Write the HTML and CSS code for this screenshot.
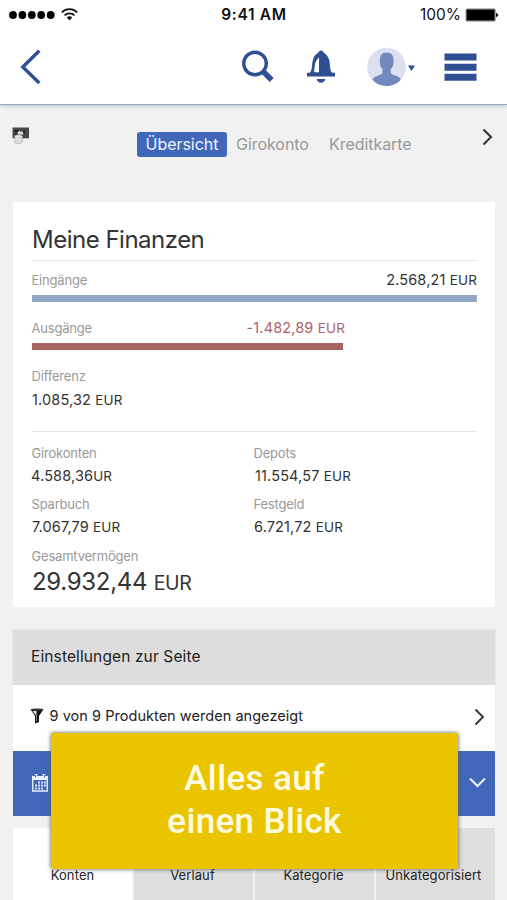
FILE: index.html
```html
<!DOCTYPE html>
<html lang="de">
<head>
<meta charset="utf-8">
<title>Meine Finanzen</title>
<link rel="stylesheet" href="styles.css">
</head>
<body>
<div class="screen">
  <header class="top">
    <div class="status">
      <div class="signal">
        <svg width="46" height="8" viewBox="0 0 46 8"><circle cx="4" cy="4" r="3.9"/><circle cx="13.4" cy="4" r="3.9"/><circle cx="22.8" cy="4" r="3.9"/><circle cx="32.2" cy="4" r="3.9"/><circle cx="41.7" cy="4" r="3.9"/></svg>
        <svg class="wifi" width="17" height="13" viewBox="0 0 17 13" fill="none" stroke="#111" stroke-width="1.7"><path d="M.8 4.4C5 .1 12 .1 16.200 4.400M3.500 7.300c2.800-2.700 7.200-2.700 10 0"/><path d="M5.700 9.300c1.600-1.500 4-1.500 5.600 0L8.500 12.500z" fill="#111" stroke="none"/></svg>
      </div>
      <span class="time">9:41 AM</span>
      <div class="power"><span class="percent">100%</span>
        <svg width="34" height="14" viewBox="0 0 34 14"><rect x=".6" y=".6" width="30" height="12.800" rx="1.500" fill="#777"/><rect x="1.800" y="1.800" width="27.600" height="10.400" rx=".5"/><path d="M31 4.500 33.500 7 31 9.500z"/></svg>
      </div>
    </div>
    <nav class="toolbar">
      <svg class="back" width="22" height="36" viewBox="0 0 22 36" fill="none" stroke="#304f92" stroke-width="3.400"><path d="M20.300 1.800 3.800 18l16.500 16"/></svg>
      <svg class="search" width="33" height="34" viewBox="0 0 33 34" fill="none" stroke="#304f92"><circle cx="13" cy="13.500" r="11.300" stroke-width="3.400"/><path d="m20.700 21 2.500 2.500" stroke-width="4"/><path d="m22.200 22.500 7.500 7.500" stroke-width="5.500"/></svg>
      <svg class="bell" width="30" height="34" viewBox="0 0 30 34" fill="#304f92"><path d="M1 22.700h2.800c3-3 1.700-9 3.200-13.200C8.300 5.500 10.500 3.500 12.500 2.500c.5-2.700 4.500-2.700 5 0 2 1 4.200 3 5.500 7 1.500 4.200.2 10.200 3.200 13.200H29v3.800H1zM10.800 29h8.400c-.5 5-7.900 5-8.400 0z"/><path d="M13 7.500v14.700H8.200c.4-5 .2-11 4.800-14.700z" fill="#fff"/></svg>
      <svg class="avatar" width="49" height="40" viewBox="0 0 49 40"><circle cx="19.500" cy="20" r="19.300" fill="#dcdff0"/><path d="M5.400 32.800C8 28 14.500 28.500 15.500 26v-4c-2-1.700-2.400-4-2.500-6-.7-5.500.5-10.500 6.700-10.500s7.500 5 6.700 10.500c-.2 2.300-.7 4.500-2.700 6v4c1 2.500 8 2 10.200 6.500-7 8.500-21 8.700-28.500.3z" fill="#7189bd"/><path d="M41 18.500h7L44.500 24z" fill="#304f92"/></svg>
      <svg class="menu" width="33" height="28" viewBox="0 0 33 28" fill="#304f92"><path d="M.5.500h32v7H.500zM.500 10.700h32v7H.500zM.500 20.700h32v7H.500z"/></svg>
    </nav>
  </header>

  <section class="accounts">
    <svg class="mini" width="18" height="18" viewBox="0 0 18 18"><path d="M.5.500h16.500v10.800H.500z" fill="#48484a"/><path d="M2.500 3h5.500v2H2.500zM3 6h3v2H3zM10 4h3v3h-3z" fill="#222"/><path d="M6 5l1.500-1.500L9 5l1.500-1 1 3.500h-6z" fill="#ddd"/><rect x="2.700" y="8" width="7.600" height="8.500" rx="2" fill="#e8e8e8" stroke="#aaa" stroke-width=".7"/><path d="M3 11h7M3 14h7" stroke="#aaa" stroke-width=".6"/></svg>
    <div class="tabs"><span class="tab active">Übersicht</span><span class="tab giro">Girokonto</span><span class="tab credit">Kreditkarte</span></div>
    <svg class="next" width="11" height="18" viewBox="0 0 11 18" fill="none" stroke="#333" stroke-width="2"><path d="m1.500 1.500 7.500 7.500-7.500 7.500"/></svg>
  </section>

  <main class="finance">
    <h1>Meine Finanzen</h1>
    <div class="flow"><span class="label">Eingänge</span><span class="value">2.568,21 <small>EUR</small></span></div>
    <div class="bar income"></div>
    <div class="flow out"><span class="label">Ausgänge</span><span class="value negative">-1.482,89 <small>EUR</small></span></div>
    <div class="bar expense"></div>
    <div class="difference"><div class="label">Differenz</div><div class="value">1.085,32 <small>EUR</small></div></div>
    <div class="balances">
      <div class="item"><div class="label">Girokonten</div><div class="value first">4.588,36<small>UR</small></div></div>
      <div class="item"><div class="label">Depots</div><div class="value depot">11.554,57 <small>EUR</small></div></div>
      <div class="item"><div class="label">Sparbuch</div><div class="value">7.067,79 <small>EUR</small></div></div>
      <div class="item"><div class="label">Festgeld</div><div class="value">6.721,72 <small>EUR</small></div></div>
    </div>
    <div class="label total-label">Gesamtvermögen</div>
    <div class="total">29.932,44 <small>EUR</small></div>
  </main>

  <section class="settings">
    <h2>Einstellungen zur Seite</h2>
    <div class="filter">
      <svg class="funnel" width="14" height="16" viewBox="0 0 14 16"><path d="M.5 1.200h13L9 8v6l-4 1.500V8z" fill="#151515"/><path d="M2.500 3h4v10H6V7.500z" fill="#ddd"/><ellipse cx="7" cy="1.600" rx="6.500" ry="1.200" fill="#333"/></svg>
      <span>9 von 9 Produkten werden angezeigt</span>
      <svg class="arrow" width="11" height="18" viewBox="0 0 11 18" fill="none" stroke="#333" stroke-width="1.800"><path d="m1.500 1.500 7.500 7.500-7.500 7.500"/></svg>
    </div>
    <div class="period">
      <svg width="16" height="18" viewBox="0 0 16 18"><path d="M.7 3h14.600v14H.7z" fill="none" stroke="#e8f2ff" stroke-width="1.400"/><path d="M0 2h16v4H0z" fill="#e8f2ff"/><path d="M4 0v4M12 0v4" stroke="#e8f2ff" stroke-width="2.500"/><path d="M3.500 1v2.500M12.500 1v2.500" stroke="#4067b8"/><path d="M6 7.500h2v2H6zM9 7.500h2v2H9zM12 7.500h2v2h-2zM3 10.500h2v2H3zM6 10.500h2v2H6zM9 10.500h2v2H9zM12 10.500h2v2h-2zM3 13.500h2v2H3zM6 13.500h2v2H6zM9 13.500h2v2H9z" fill="#d8e5fb"/></svg>
      <svg width="17" height="11" viewBox="0 0 17 11" fill="none" stroke="#e7f2ff" stroke-width="2"><path d="m1 1.500 7.500 7.500L16 1.500"/></svg>
    </div>
  </section>

  <nav class="views"><span class="view selected">Konten</span><span class="view">Verlauf</span><span class="view">Kategorie</span><span class="view wide">Unkategorisiert</span></nav>
  <div class="banner"><span class="line1">Alles auf</span><span class="line2">einen Blick</span></div>
</div>
</body>
</html>
```
FILE: styles.css
```css
* { box-sizing: border-box; }
body { margin: 0; background: #f1f1f1; font-family: Inter, "Liberation Sans", sans-serif; color: #333; }
svg { display: block; flex: none; }
.screen { position: relative; width: 507px; height: 900px; overflow: hidden; }
.top { height: 105px; background: #fff; border-bottom: 1px solid #9ba4c0; box-shadow: 0 1px 4px #bac5cf; }
.status { height: 30px; padding: 0 8px 1px 9px; display: grid; grid-template-columns: 1fr auto 1fr; align-items: center; color: #111; }
.signal, .power { display: flex; align-items: center; }
.wifi { margin-left: 6px; }
.power { justify-content: flex-end; gap: 4px; }
.time { font-size: 15.5px; font-weight: 600; letter-spacing: .7px; }
.percent { font-size: 15.5px; }
.toolbar { height: 74px; display: flex; align-items: center; padding: 0 29px 0 19px; }
.search { margin-left: 201px; }
.bell { margin-left: 31px; }
.avatar { margin-left: 31px; }
.menu { margin-left: 28px; }
.accounts { height: 97px; display: flex; align-items: flex-start; padding: 22px 14px 0 12px; }
.tabs { display: flex; margin: 5px auto 0 107px; }
.tab { font-size: 16px; line-height: 25px; color: #999; white-space: nowrap; letter-spacing: -.05px; }
.active { width: 90px; border-radius: 3px; background: #4067b9; color: #edf4ff; text-align: center; margin-right: 9px; }
.giro { width: 93px; }
.next { margin-top: 1px; }
.finance { margin: 0 12px 0 13px; width: 482px; height: 405px; padding: 0 18px 0 19px; background: #fff; }
h1 { margin: 0; height: 59px; padding-top: 23px; border-bottom: 1px solid #e3e3e3; font-size: 24px; line-height: 30px; font-weight: 400; letter-spacing: -.5px; }
.flow { height: 34px; padding-top: 9px; display: flex; justify-content: space-between; line-height: 20px; }
.out { width: 313px; height: 41px; padding-top: 16px; }
.label { font-size: 13px; color: #999; letter-spacing: -.2px; margin-left: -.5px; }
.value { font-size: 14.5px; white-space: nowrap; letter-spacing: .14px; }
.value small { font-size: 13.5px; }
.negative { color: #ad6269; }
.bar { height: 7px; }
.income { background: #94a6c8; }
.expense { width: 311px; background: #a96464; }
.difference { height: 82px; border-bottom: 1px solid #e3e3e3; padding-top: 16px; line-height: 20px; }
.difference .value { margin-top: 3.5px; }
.balances { display: grid; grid-template-columns: 222px 1fr; padding-top: 11px; row-gap: 9px; }
.item { height: 42px; line-height: 20px; }
.item .value { margin-top: 2.5px; }
.item .first { margin-left: -1px; }
.item .depot { margin-left: 1px; }
.total-label { line-height: 20px; margin-top: 10px; }
.total { font-size: 24px; line-height: 30px; margin-top: 1px; letter-spacing: -.3px; }
.total small { font-size: 19.5px; }
.settings { width: 482px; margin: 23px 12px 0 13px; height: 186px; }
h2 { margin: 0; height: 55px; background: #ddd; padding-left: 18px; font-size: 15.5px; font-weight: 400; line-height: 54px; letter-spacing: .12px; box-shadow: 0 0 2px #ccc; color: #222; }
.filter { height: 66px; background: #fff; display: flex; align-items: center; padding: 0 10px 5px 17px; font-size: 14.5px; color: #222; }
.filter span { margin-left: 5.5px; white-space: nowrap; letter-spacing: .04px; }
.arrow { margin: 3px 0 0 auto; }
.period { height: 65px; background: #4067b9; display: flex; align-items: center; justify-content: space-between; padding: 0 9px 2px 19px; }
.views { margin: 12px 12px 0 13px; display: grid; grid-template-columns: repeat(4, 119px); column-gap: 2px; height: 72px; }
.view { background: #dedede; text-align: center; padding: 39px 2px 0 0; font-size: 13px; line-height: 17px; color: #222; white-space: nowrap; letter-spacing: .1px; }
.selected { background: #fff; padding-right: 0; }
.wide { padding-right: 4px; }
.banner { position: absolute; left: 51px; top: 733px; width: 407px; height: 136px; padding-top: 24px; background: #ebc400; border-radius: 2px; box-shadow: 0 0 4px #555; color: #fffbe1; display: flex; flex-direction: column; align-items: center; font-family: Roboto, sans-serif; font-size: 35px; line-height: 43px; font-weight: 500; letter-spacing: .35px; }
```
